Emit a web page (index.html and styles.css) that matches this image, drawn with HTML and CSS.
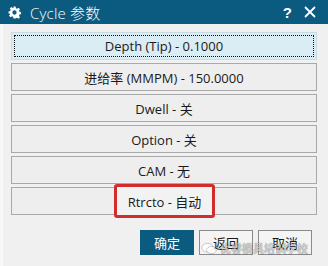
FILE: index.html
```html
<!DOCTYPE html>
<html lang="zh-CN">
<head>
  <meta charset="UTF-8">
  <title>Cycle 参数</title>
  <link rel="stylesheet" href="styles.css">
</head>
<body>
  <div class="dialog">
    <header class="titlebar">
      <svg class="gear" viewBox="0 0 24 24">
        <path d="M10 1h4l.6 3.1 2 .9 2.7-1.8 2.8 2.8-1.8 2.7.9 2 3.1.6v4l-3.1.6-.9 2 1.8 2.7-2.8 2.8-2.7-1.8-2 .9L14 23h-4l-.6-3.1-2-.9-2.7 1.8-2.8-2.8 1.8-2.7-.9-2L1 14v-4l3.1-.6.9-2-1.8-2.7 2.8-2.8 2.7 1.8 2-.9z M12 8a4 4 0 1 0 0 8 4 4 0 1 0 0-8z" fill-rule="evenodd"/>
      </svg>
      <span class="title">Cycle 参数</span>
      <span class="help">?</span>
      <svg class="close" viewBox="0 0 12 12"><path d="M1 1l10 10M11 1L1 11"/></svg>
    </header>

    <main class="content">
      <div class="option-list">
        <button class="option active"><span class="focus">Depth (Tip) - 0.1000</span></button>
        <button class="option">进给率 (MMPM) - 150.0000</button>
        <button class="option">Dwell - 关</button>
        <button class="option">Option - 关</button>
        <button class="option">CAM - 无</button>
        <button class="option"><span class="marked">Rtrcto - 自动</span></button>
      </div>

      <div class="actions">
        <button class="action primary">确定</button>
        <button class="action">返回</button>
        <button class="action">取消</button>
      </div>
    </main>

    <div class="watermark">
      <svg class="wm-icon" viewBox="0 0 20 16">
        <ellipse cx="8" cy="7" rx="7" ry="5.5"/>
        <ellipse cx="13" cy="10" rx="6" ry="4.5"/>
      </svg>
      <span>优睿模具培训学校</span>
    </div>
  </div>
</body>
</html>
```

FILE: styles.css
```css
:root {
  --title-blue: #0b5a80;
  --panel: #f0f0f0;
  --border: #a9a9a9;
  --text: #1a1a1a;
  --mark-red: #d12d2d;
}

* {
  box-sizing: border-box;
  margin: 0;
  padding: 0;
}

body {
  width: 328px;
  height: 266px;
  overflow: hidden;
  font-family: "Open Sans", "Noto Sans", "Noto Sans CJK SC", sans-serif;
  color: var(--text);
  background: var(--panel);
}

.dialog {
  position: relative;
  height: 266px;
  border-left: 3px solid #f8f8f8;
}

.titlebar {
  height: 24px;
  margin-left: -3px;
  background-color: var(--title-blue);
  color: #ffffff;
  display: flex;
  align-items: center;
  padding: 0 12px 0 8px;
}

.gear {
  width: 13px;
  height: 13px;
  fill: #ffffff;
  margin-right: 9px;
}

.title {
  flex: 1;
  font-size: 15px;
  font-weight: 300;
  letter-spacing: 0.2px;
}

.help {
  font-size: 15px;
  font-weight: bold;
  font-family: "Liberation Sans", sans-serif;
  margin-right: 12px;
}

.close {
  width: 12px;
  height: 12px;
  stroke: #ffffff;
  stroke-width: 1.8;
  fill: none;
}

.content {
  padding: 8px 11px 0 8px;
}

.option-list {
  display: flex;
  flex-direction: column;
  gap: 3px;
}

.option {
  height: 28px;
  border: 1px solid var(--border);
  background-color: #eeeeee;
  font-family: inherit;
  font-size: 13px;
  color: var(--text);
  display: flex;
  align-items: center;
  justify-content: center;
}

.option.active {
  background-color: #dbedf4;
  border-color: #c9dbe3;
  padding: 2px;
}

.option .focus {
  flex: 1;
  align-self: stretch;
  display: flex;
  align-items: center;
  justify-content: center;
  border: 1px dotted #111111;
}

.marked {
  height: 34px;
  width: 101px;
  margin-left: 1px;
  display: flex;
  align-items: center;
  justify-content: center;
  border: 3px solid var(--mark-red);
  border-radius: 3px;
  background-color: #f2f2f2;
}

.actions {
  display: flex;
  justify-content: flex-end;
  gap: 5px;
  margin-top: 15px;
  padding-right: 5px;
}

.action {
  width: 54px;
  height: 25px;
  border: 1px solid #8a8a8a;
  background-color: #f4f4f4;
  font-family: inherit;
  font-size: 13px;
  color: var(--text);
}

.action.primary {
  background-color: var(--title-blue);
  border-color: var(--title-blue);
  color: #ffffff;
}

.watermark {
  position: absolute;
  left: 198px;
  top: 240px;
  display: flex;
  align-items: center;
  gap: 3px;
  font-size: 11px;
  color: rgba(255, 255, 255, 0.75);
  text-shadow: 0 0 1px rgba(0, 0, 0, 0.45), 0 0 1px rgba(0, 0, 0, 0.45);
  pointer-events: none;
}

.wm-icon {
  width: 16px;
  height: 13px;
  fill: rgba(255, 255, 255, 0.8);
  stroke: rgba(0, 0, 0, 0.3);
  stroke-width: 0.8;
}
```
